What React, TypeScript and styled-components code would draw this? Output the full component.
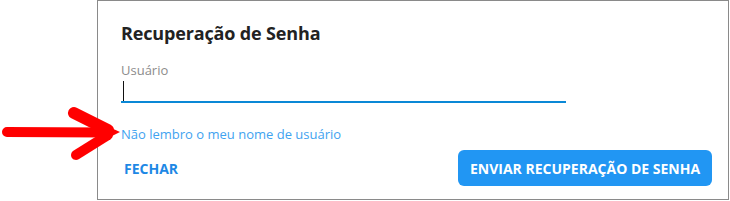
import React from "react";
import styled, { createGlobalStyle } from "styled-components";

const Global = createGlobalStyle`
  html, body { margin: 0; padding: 0; background: #fff; }
  body { font-family: "Open Sans", "Noto Sans", sans-serif; }
`;

const Page = styled.div`
  position: relative;
  width: 730px;
  height: 201px;
  overflow: hidden;
`;

const Dialog = styled.div`
  box-sizing: border-box;
  margin-left: 97px;
  width: 632px;
  height: 200px;
  border: 1px solid #8a8a8a;
  display: flex;
  flex-direction: column;
  padding: 20px 16px 0 23px;
`;

const Title = styled.h2`
  margin: 0;
  font-size: 18px;
  line-height: 24px;
  font-weight: 700;
  letter-spacing: -0.15px;
  color: #222;
`;

const Label = styled.label`
  margin-top: 16px;
  font-size: 13px;
  line-height: 18px;
  color: #8c8c8c;
`;

const Field = styled.div`
  width: 443px;
  height: 21px;
  margin-top: 1px;
  border-bottom: 2px solid #0a88d6;
  display: flex;
  align-items: flex-end;
  padding-left: 2px;
  box-sizing: content-box;
`;

const Caret = styled.span`
  width: 1px;
  height: 20px;
  background: #111;
`;

const Link = styled.a`
  margin-top: 22px;
  font-size: 13px;
  line-height: 18px;
  color: #3fa3f0;
  text-decoration: none;
  align-self: flex-start;
`;

const Footer = styled.div`
  margin-top: 7px;
  display: flex;
  justify-content: space-between;
  align-items: center;
`;

const TextButton = styled.button`
  border: none;
  background: none;
  padding: 0 0 0 3px;
  font-family: inherit;
  font-size: 14px;
  font-weight: 700;
  color: #1e88e5;
  height: 36px;
`;

const Primary = styled.button`
  border: none;
  border-radius: 6px;
  background: #2196f3;
  color: #fff;
  font-family: inherit;
  font-size: 14px;
  font-weight: 700;
  height: 36px;
  width: 254px;
  padding: 0;
`;

const Arrow = styled.svg`
  position: absolute;
  left: 0;
  top: 100px;
`;

export default function App() {
  return (
    <Page>
      <Global />
      <Dialog>
        <Title>Recuperação de Senha</Title>
        <Label>Usuário</Label>
        <Field>
          <Caret />
        </Field>
        <Link href="#">Não lembro o meu nome de usuário</Link>
        <Footer>
          <TextButton>FECHAR</TextButton>
          <Primary>ENVIAR RECUPERAÇÃO DE SENHA</Primary>
        </Footer>
      </Dialog>
      <Arrow width="125" height="65" viewBox="0 100 125 65">
        <g fill="none" stroke="#ff0000" strokeLinecap="round">
          <path d="M7 132 L106 132.5" strokeWidth="10" />
          <path d="M74 113 L108 130" strokeWidth="12" />
          <path d="M108 135 L76 155" strokeWidth="10" />
        </g>
        <path d="M98 122 L120 132 L98 143 Z" fill="#ff0000" />
      </Arrow>
    </Page>
  );
}
